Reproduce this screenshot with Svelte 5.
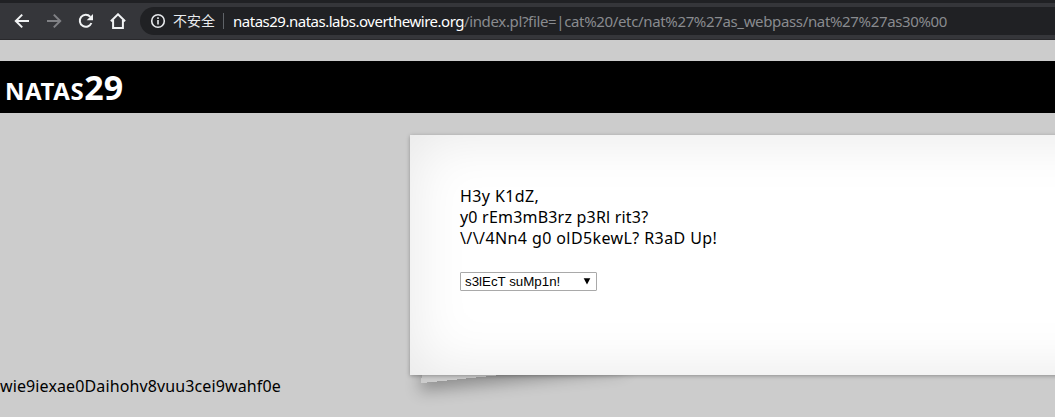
<script>
  const lines = ['H3y K1dZ,', 'y0 rEm3mB3rz p3Rl rit3?', '\\/\\/4Nn4 g0 olD5kewL? R3aD Up!'];
</script>

<div class="window">
  <header class="toolbar">
    <nav>
      <svg viewBox="0 0 16 16"><path d="M15 8H2M8.2 1.6 1.8 8l6.4 6.4" /></svg>
      <svg class="off" viewBox="0 0 16 16"><path d="M1 8h13M7.8 1.6 14.2 8l-6.4 6.4" /></svg>
      <svg viewBox="0 0 16 16"><path d="M13.4 10A6 6 0 1 1 12.3 3.8" /><path class="solid" d="M15 .9v6.3H8.7z" /></svg>
      <svg viewBox="0 0 16 16"><path d="M.9 8.3 8 1.3l7.1 7M3.1 7v8h9.8V7" /></svg>
    </nav>
    <div class="address">
      <svg viewBox="0 0 16 16"><circle cx="8" cy="8" r="6.3" /><path d="M8 7v4.6M8 4.2v1.7" /></svg>
      <span class="warn">不安全</span>
      <i></i>
      <span class="host">natas29.natas.labs.overthewire.org</span><span class="path">/index.pl?file=|cat%20/etc/nat%27%27as_webpass/nat%27%27as30%00</span>
    </div>
  </header>
  <h1><span>natas</span>29</h1>
  <main>
    <div class="message">
      {#each lines as line, i}<p class="l{i}">{line}</p>{/each}
    </div>
    <button class="picker"><span>s3lEcT suMp1n!</span><svg viewBox="0 0 8 7"><path d="M.7.3h6.6L4 6.5z" /></svg></button>
  </main>
  <p class="result">wie9iexae0Daihohv8vuu3cei9wahf0e</p>
</div>

<style>
  :global(body) { margin: 0; background: #ccc; overflow: hidden; }
  .window { height: 417px; overflow: hidden; isolation: isolate; background: #ccc; color: #000; font: 16px/21px "Noto Sans", "Noto Sans CJK SC", sans-serif; }
  .toolbar { box-sizing: border-box; height: 40px; border-top: 3px solid #202124; border-bottom: 1px solid #29292c; background: #35363a; display: flex; padding: 4px 0 4px 14px; }
  nav { display: flex; gap: 16px; width: 126px; align-items: center; }
  nav svg { width: 16px; height: 16px; flex: none; fill: none; stroke: #f1f3f4; stroke-width: 2; }
  nav .off { stroke: #808185; }
  nav .solid { fill: #f1f3f4; stroke: none; }
  .address { flex: 1; height: 28px; border-radius: 14px 0 0 14px; background: #202124; display: flex; align-items: center; padding-left: 10px; white-space: nowrap; font-size: 15px; line-height: 28px; }
  .address svg { width: 16px; height: 16px; fill: none; stroke: #e8eaed; stroke-width: 1.6; }
  .warn { width: 44px; margin-left: 7px; color: #e8eaed; font: 14px/26px "Noto Sans CJK SC", sans-serif; height: 28px; }
  .address i { width: 1px; height: 16px; margin: 0 9px 0 6px; background: #5f6368; }
  .host { color: #fff; letter-spacing: -.49px; }
  .path { color: #898b8f; letter-spacing: -.35px; }
  h1 { box-sizing: border-box; margin: 21px 0 0; height: 52px; padding-left: 5px; background: #000; color: #fff; font: bold 34px/53px "Noto Sans", sans-serif; }
  h1 span { font-size: 24px; text-transform: uppercase; letter-spacing: .55px; }
  main { position: relative; box-sizing: border-box; width: 1100px; height: 240px; margin: 22px 0 0 410px; padding: 51px 50px 0; background: #fff; box-shadow: 0 1px 4px rgba(0,0,0,.3), 0 0 60px rgba(0,0,0,.1) inset; }
  main::before { content: ""; position: absolute; z-index: -1; left: 21px; bottom: 2px; width: 200px; height: 100px; transform: skew(-15deg) rotate(-6deg); box-shadow: 0 8px 16px rgba(0,0,0,.3); }
  p { margin: 0; white-space: nowrap; }
  .l0 { letter-spacing: .4px; }
  .l1 { letter-spacing: .2px; }
  .l2 { letter-spacing: .4px; }
  .picker { box-sizing: border-box; width: 137px; height: 19px; margin: 23px 0 0; padding: 0 5px 0 4px; border: 1px solid #a9a9a9; border-radius: 1px; background: #fff; color: #000; display: flex; align-items: center; justify-content: space-between; font: 13.33px/17px "Liberation Sans", sans-serif; }
  .picker svg { width: 8px; height: 7px; }
  .result { margin-top: 1px; letter-spacing: .12px; }
</style>
